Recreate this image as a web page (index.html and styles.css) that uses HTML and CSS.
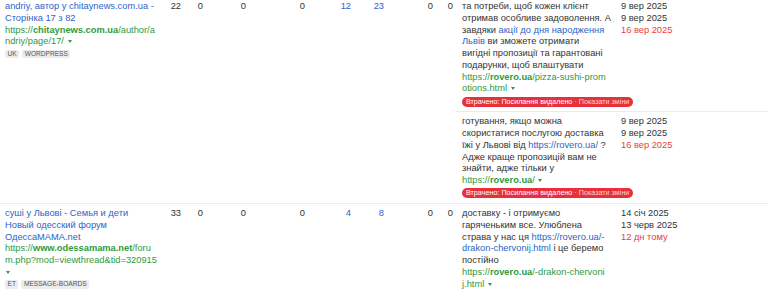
FILE: index.html
```html
<!DOCTYPE html>
<html lang="uk">
<head>
<meta charset="utf-8">
<title>Backlinks</title>
<link rel="stylesheet" href="styles.css">
</head>
<body>
<div class="table">
  <div class="row row-first">
    <div class="ref">
      <a class="title" href="#">andriy, автор у chitaynews.com.ua - Сторінка 17 з 82</a>
      <div class="url">https://<b>chitaynews.com.ua</b>/author/a<br>ndriy/page/17/ <span class="caret"></span></div>
      <div class="tags"><span class="tag">UK</span><span class="tag">WORDPRESS</span></div>
    </div>
    <div class="num">22</div>
    <div class="num">0</div>
    <div class="num">0</div>
    <div class="num">0</div>
    <div class="num blue">12</div>
    <div class="num blue">23</div>
    <div class="num">0</div>
    <div class="num">0</div>
    <div class="links">
      <div class="sub">
        <div class="ctx">
          <p>та потреби, щоб кожен клієнт отримав особливе задоволення. А завдяки <a href="#">акції до дня народження Львів</a> ви зможете отримати<br>вигідні пропозиції та гарантовані подарунки, щоб влаштувати</p>
          <div class="url">https://<b>rovero.ua</b>/pizza-sushi-prom<br>otions.html <span class="caret"></span></div>
          <div class="lost">Втрачено: Посилання видалено <span class="lost-more">· Показати зміни</span></div>
        </div>
        <div class="dates">
          <div>9 вер 2025</div>
          <div>9 вер 2025</div>
          <div class="red">16 вер 2025</div>
        </div>
      </div>
      <div class="sub">
        <div class="ctx">
          <p>готування, якщо можна скористатися послугою доставка їжі у Львові від <a href="#">https://rovero.ua/</a> ? Адже краще пропозицій вам не знайти, адже тільки у</p>
          <div class="url">https://<b>rovero.ua</b>/ <span class="caret"></span></div>
          <div class="lost">Втрачено: Посилання видалено <span class="lost-more">· Показати зміни</span></div>
        </div>
        <div class="dates">
          <div>9 вер 2025</div>
          <div>9 вер 2025</div>
          <div class="red">16 вер 2025</div>
        </div>
      </div>
    </div>
  </div>
  <div class="row">
    <div class="ref">
      <a class="title" href="#">суші у Львові - Семья и дети Новый одесский форум ОдессаМАМА.net</a>
      <div class="url">https://<b>www.odessamama.net</b>/foru<br>m.php?mod=viewthread&amp;tid=320915<br><span class="caret"></span></div>
      <div class="tags"><span class="tag">ET</span><span class="tag">MESSAGE-BOARDS</span></div>
    </div>
    <div class="num">33</div>
    <div class="num">0</div>
    <div class="num">0</div>
    <div class="num">0</div>
    <div class="num blue">4</div>
    <div class="num blue">8</div>
    <div class="num">0</div>
    <div class="num">0</div>
    <div class="links">
      <div class="sub">
        <div class="ctx">
          <p>доставку - і отримуємо гаряченьким все. Улюблена страва у нас ця <a href="#">https://rovero.ua/-drakon-chervonij.html</a> і це беремо постійно</p>
          <div class="url">https://<b>rovero.ua</b>/-drakon-chervoni<br>j.html <span class="caret"></span></div>
        </div>
        <div class="dates">
          <div>14 січ 2025</div>
          <div>13 черв 2025</div>
          <div class="red">12 дн тому</div>
        </div>
      </div>
    </div>
  </div>
</div>
</body>
</html>
```
FILE: styles.css
```css
html, body {
  margin: 0;
  padding: 0;
  background: #fff;
}
body {
  font-family: "Liberation Sans", Arial, sans-serif;
  font-size: 9.3px;
  line-height: 11.75px;
  color: #333;
  overflow: hidden;
}
a {
  color: #2d64c6;
  text-decoration: none;
}
p {
  margin: 0;
}
.table {
  margin-top: -3px;
}
.row {
  display: grid;
  grid-template-columns: 153px 23px 22px 43px 59px 46px 33px 49px 20px 1fr;
  border-bottom: 1px solid #ececec;
  padding-left: 5px;
}
.ref {
  padding: 4px 0 4px 0;
}
.title {
  display: block;
}
.url {
  color: #2f9a40;
  white-space: nowrap;
}
.url b {
  font-weight: 700;
}
.caret {
  display: inline-block;
  vertical-align: middle;
  margin-left: 1px;
  border-left: 2.5px solid transparent;
  border-right: 2.5px solid transparent;
  border-top: 3px solid #2f9a40;
}
.tags {
  display: flex;
  gap: 3px;
  margin-top: 1.5px;
}
.tag {
  background: #ececec;
  color: #555;
  font-size: 6.6px;
  line-height: 8.5px;
  padding: 0 2.5px;
  border-radius: 2px;
}
.num {
  padding-top: 4px;
  text-align: right;
}
.num.blue {
  color: #2d64c6;
}
.links {
  display: flex;
  flex-direction: column;
  margin-left: 3px;
}
.sub {
  display: grid;
  grid-template-columns: 159px 1fr;
  padding: 4px 0 4px 6px;
}
.sub + .sub {
  border-top: 1px solid #ececec;
}
.ctx {
  width: 150px;
}
.dates .red {
  color: #eb3b3b;
}
.lost {
  display: inline-block;
  margin-top: 1.5px;
  background: #e8303a;
  color: #fff;
  font-size: 7.2px;
  line-height: 10px;
  padding: 0 4px;
  border-radius: 5px;
  white-space: nowrap;
}
.lost-more {
  color: #ffd2d4;
}
```
